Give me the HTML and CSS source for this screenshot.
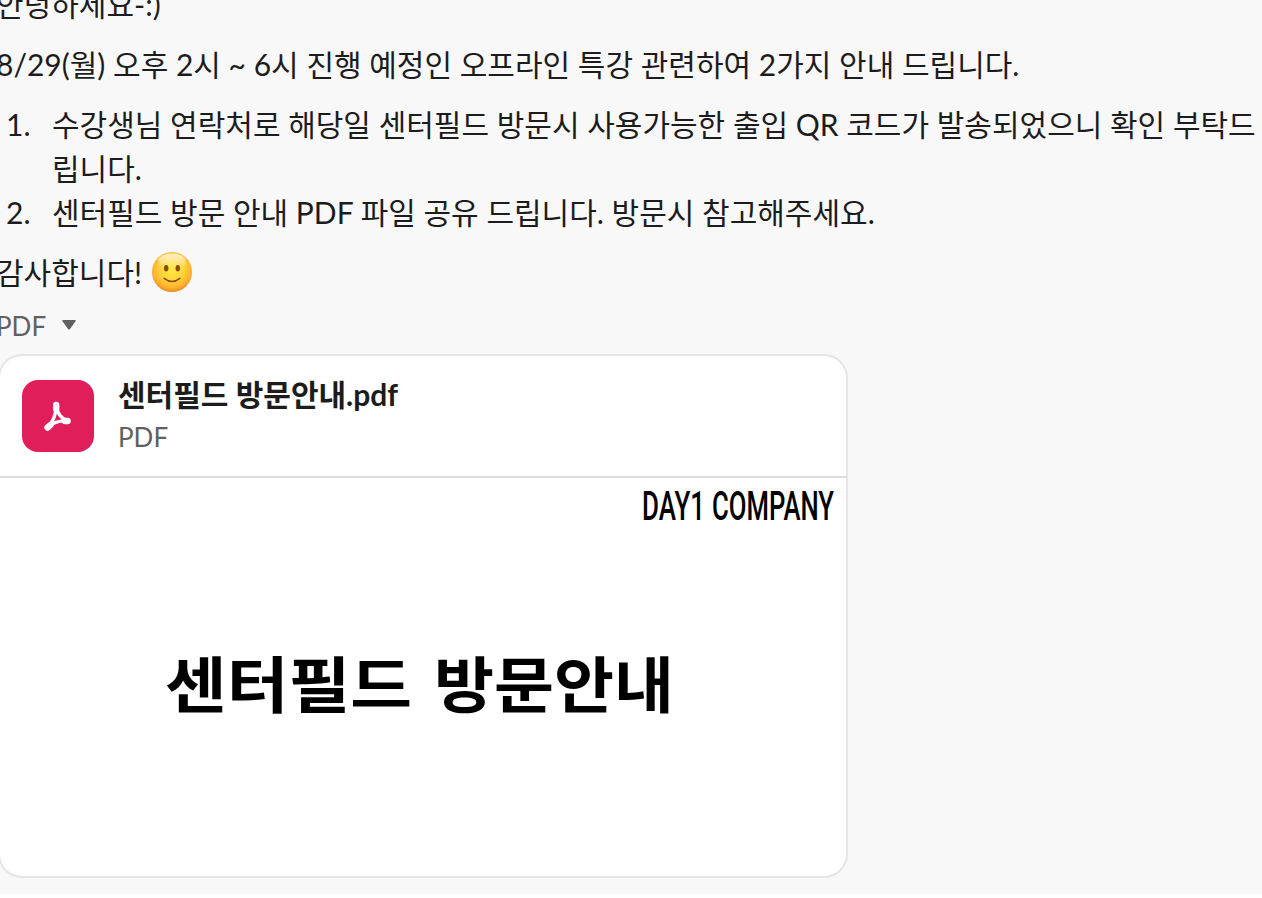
FILE: index.html
```
<!DOCTYPE html>
<html lang="ko">
<head>
    <meta charset="UTF-8">
    <meta name="viewport" content="width=device-width, initial-scale=1.0">
    <title>센터필드 방문안내</title>
    <link rel="stylesheet" href="styles.css">
</head>
<body>
    <main class="message">
        <p>안녕하세요-:)</p>
        <p>8/29(월) 오후 2시 ~ 6시 진행 예정인 오프라인 특강 관련하여 2가지 안내 드립니다.</p>
        <ol class="notice-list">
            <li><span class="number">1.</span><span class="notice">수강생님 연락처로 해당일 센터필드 방문시 사용가능한 출입 QR 코드가 발송되었으니 확인 부탁드립니다.</span></li>
            <li><span class="number">2.</span><span class="notice">센터필드 방문 안내 PDF 파일 공유 드립니다. 방문시 참고해주세요.</span></li>
        </ol>
        <p class="thanks">
            감사합니다!
            <svg class="emoji" viewBox="0 0 40 40">
                <defs>
                    <radialGradient id="face" cx="50%" cy="42%" r="59%">
                        <stop offset="0" stop-color="#ffe83e"/>
                        <stop offset="0.5" stop-color="#ffd43a"/>
                        <stop offset="0.82" stop-color="#fdb02f"/>
                        <stop offset="1" stop-color="#ea8318"/>
                    </radialGradient>
                    <linearGradient id="shine" x1="0" y1="0" x2="0" y2="1">
                        <stop offset="0" stop-color="#fff" stop-opacity="0.75"/>
                        <stop offset="1" stop-color="#fff" stop-opacity="0"/>
                    </linearGradient>
                </defs>
                <circle cx="20" cy="20" r="20" fill="url(#face)"/>
                <ellipse cx="20" cy="9.500" rx="14" ry="8" fill="url(#shine)"/>
                <ellipse cx="14.2" cy="16.2" rx="2.2" ry="3.2" fill="#8a4b0b"/>
                <ellipse cx="25.8" cy="16.2" rx="2.2" ry="3.2" fill="#8a4b0b"/>
                <path d="M12.2 26.3Q20 32.6 27.8 26.3" fill="none" stroke="#8a4b0b" stroke-width="1.5" stroke-linecap="round"/>
            </svg>
        </p>
        <div class="file-label">
            <span>PDF</span>
            <svg class="caret" viewBox="0 0 14 10"><path d="M.8 0h12.400q1 0 .5 1L8 9q-1 1-2 0L.3 1Q-.2 0 .8 0z" fill="#616061"/></svg>
        </div>
        <section class="file-card">
            <header class="file-header">
                <div class="file-icon">
                    <svg viewBox="0 0 28 30" fill="none" stroke="#fff" stroke-linecap="round" stroke-linejoin="round">
                        <path d="M12.200 4.500C12.200 12 9.500 20 3.800 26" stroke-width="3.400"/>
                        <path d="M3.800 26C9 21.500 16 19.500 23.500 20" stroke-width="3.400"/>
                        <path d="M12.200 4.500C13 12 17.500 17.500 23.500 20" stroke-width="3.400"/>
                        <path d="M12.200 4v4M3.500 26.500l2.800-2.400M21 20h2.600" stroke-width="6.400"/>
                    </svg>
                </div>
                <div class="file-info">
                    <strong>센터필드 방문안내.pdf</strong>
                    <span>PDF</span>
                </div>
            </header>
            <svg class="preview" viewBox="0 0 846 398">
                <g class="company">
                    <text x="642" y="42" textLength="63" lengthAdjust="spacingAndGlyphs">DAY1</text>
                    <text x="712" y="42" textLength="122" lengthAdjust="spacingAndGlyphs">COMPANY</text>
                </g>
                <g class="slide-title">
                    <text x="165" y="230" textLength="247" lengthAdjust="spacingAndGlyphs">센터필드</text>
                    <text x="434" y="230" textLength="240" lengthAdjust="spacingAndGlyphs">방문안내</text>
                </g>
            </svg>
        </section>
    </main>
</body>
</html>
```
FILE: styles.css
```
* {
    box-sizing: border-box;
}
body {
    margin: 0;
    height: 898px;
    overflow: hidden;
    background: white;
    color: #1d1c1d;
    font-family: Lato, "Noto Sans CJK KR", sans-serif;
    font-size: 30px;
    line-height: 44px;
}
.message {
    height: 912px;
    margin-top: -18px;
    padding-right: 4px;
    background: #f8f8f8;
}
.message p {
    margin: 0 0 16px -4px;
    height: 44px;
    white-space: nowrap;
}
.notice-list {
    list-style: none;
    margin: 0 0 16px;
    padding: 0;
}
.notice-list li {
    display: flex;
}
.number {
    flex: 0 0 52px;
    padding-left: 6px;
}
.notice {
    flex: 1;
    word-break: break-all;
}
.message .thanks {
    display: flex;
    align-items: center;
    gap: 10px;
}
.emoji {
    width: 40px;
    height: 40px;
}
.file-label {
    display: flex;
    align-items: center;
    gap: 16px;
    height: 36px;
    margin: -2px 0 10px -4px;
    color: #616061;
    font-size: 26px;
    line-height: 36px;
}
.caret {
    width: 14px;
    height: 10px;
    margin-top: -2px;
}
.file-card {
    width: 850px;
    height: 524px;
    margin-left: -2px;
    border: 2px solid #e5e5e5;
    border-radius: 24px;
    background: white;
    overflow: hidden;
}
.file-header {
    display: flex;
    gap: 24px;
    height: 122px;
    padding: 24px 22px;
    border-bottom: 2px solid #dddddd;
}
.file-icon {
    display: flex;
    align-items: center;
    justify-content: center;
    width: 72px;
    height: 72px;
    border-radius: 16px;
    background: #e01e5a;
}
.file-icon svg {
    width: 28px;
    height: 30px;
}
.file-info {
    display: flex;
    flex-direction: column;
    margin-top: -8px;
}
.file-info span {
    margin-top: 3px;
    color: #616061;
    font-size: 26px;
    line-height: 36px;
}
.preview {
    display: block;
    width: 846px;
    height: 398px;
}
.company {
    font-family: Roboto, sans-serif;
    font-size: 41px;
    font-weight: 500;
}
.slide-title {
    font-family: "Noto Sans CJK KR", sans-serif;
    font-size: 61px;
    font-weight: 700;
}
```
